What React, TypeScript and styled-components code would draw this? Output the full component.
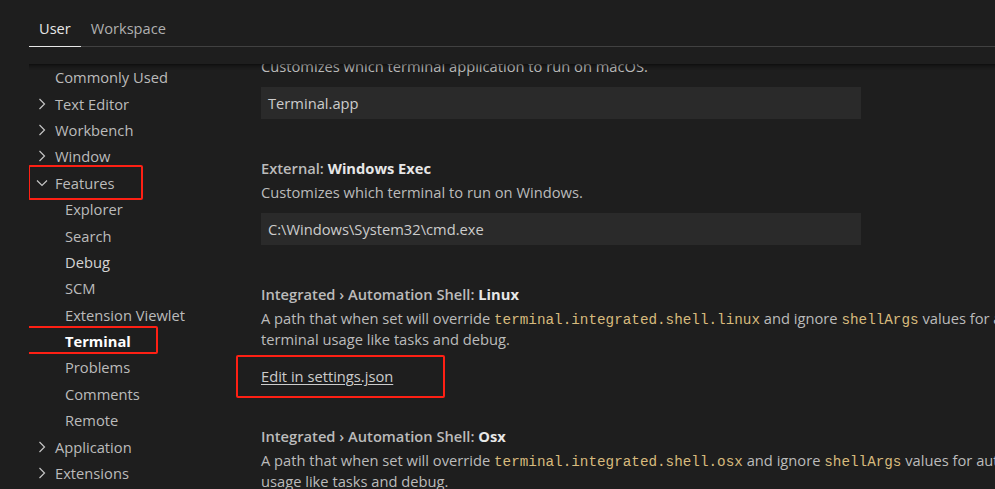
import React from 'react'
import styled, { createGlobalStyle } from 'styled-components'

const GlobalStyle = createGlobalStyle`
  html, body {
    margin: 0;
    padding: 0;
    background: #1e1e1e;
  }
  * {
    box-sizing: border-box;
  }
`

const UI_FONT = `"Open Sans", "Noto Sans", sans-serif`
const CODE_FONT = `"Liberation Mono", "DejaVu Sans Mono", monospace`

const Page = styled.div`
  width: 995px;
  height: 489px;
  overflow: hidden;
  background: #1e1e1e;
  padding-left: 29px;
  display: flex;
  flex-direction: column;
  font-family: ${UI_FONT};
  font-size: 14.7px;
  color: #bbbbbb;
`
const Header = styled.div`
  height: 64px;
  flex-shrink: 0;
`
const TabBar = styled.div`
  display: flex;
  height: 47px;
  border-bottom: 1px solid #414141;
`
const Tab = styled.div<{ $active?: boolean }>`
  display: flex;
  align-items: center;
  padding: 10px 10px 0;
  height: 47px;
  font-size: 14.6px;
  color: ${(p) => (p.$active ? '#e7e7e7' : '#b0b0b0')};
  border-bottom: 1px solid ${(p) => (p.$active ? '#e7e7e7' : 'transparent')};
`
const Body = styled.div`
  position: relative;
  flex: 1;
  display: flex;
  overflow: hidden;
  &::before {
    content: '';
    position: absolute;
    top: 0;
    left: 0;
    right: 0;
    height: 6px;
    box-shadow: #000 0 6px 6px -6px inset;
    z-index: 2;
  }
`
const Toc = styled.div`
  width: 203px;
  flex-shrink: 0;
  display: flex;
  flex-direction: column;
`
const TocRow = styled.div<{ $indent: number; $strong?: boolean; $bright?: boolean }>`
  position: relative;
  display: flex;
  align-items: center;
  height: 26.4px;
  padding-left: ${(p) => p.$indent}px;
  white-space: nowrap;
  font-weight: ${(p) => (p.$strong ? 700 : 400)};
  color: ${(p) => (p.$strong ? '#ffffff' : p.$bright ? '#d4d4d4' : '#bbbbbb')};
`
const Twistie = styled.span`
  width: 12px;
  height: 14px;
  margin-right: 7px;
  display: flex;
  align-items: center;
  justify-content: center;
`
const Highlight = styled.span<{ $left: number; $top: number; $w: number; $h: number }>`
  position: absolute;
  left: ${(p) => p.$left}px;
  top: ${(p) => p.$top}px;
  width: ${(p) => p.$w}px;
  height: ${(p) => p.$h}px;
  border: 2px solid #fe2014;
  border-radius: 2px;
  pointer-events: none;
`
const Content = styled.div`
  flex: 1;
  overflow: hidden;
  padding-left: 29px;
`
const SettingsList = styled.div`
  width: 920px;
  margin-top: -33px;
  display: flex;
  flex-direction: column;
  gap: 38px;
`
const Setting = styled.div`
  display: flex;
  flex-direction: column;
`
const Title = styled.div`
  line-height: 22px;
  font-weight: 600;
  color: #bbbbbb;
  white-space: nowrap;
`
const Key = styled.span`
  font-weight: 700;
  color: #e7e7e7;
`
const Description = styled.div`
  margin-top: 3px;
  line-height: 21px;
  color: #bbbbbb;
`
const Code = styled.code`
  font-family: ${CODE_FONT};
  font-size: 14.3px;
  line-height: 1;
  color: #d7ba7d;
`
const TextInput = styled.div`
  margin-top: 10px;
  width: 600px;
  height: 32px;
  display: flex;
  align-items: center;
  padding-left: 7px;
  background: #2a2a2a;
  color: #cccccc;
`
const LinkRow = styled.div`
  position: relative;
  margin-top: 16px;
  line-height: 21px;
`
const EditLink = styled.span`
  color: #cccccc;
  text-decoration: underline;
  text-underline-offset: 2px;
`

const Chevron = ({ open }: { open?: boolean }) => (
  <svg width="12" height="14" viewBox="0 0 12 14" fill="none">
    {open ? (
      <path d="M1 4.5 L6 9.5 L11 4.5" stroke="#c5c5c5" strokeWidth="1.2" />
    ) : (
      <path d="M3.5 2 L8.5 7 L3.5 12" stroke="#c5c5c5" strokeWidth="1.2" />
    )}
  </svg>
)

type TocItem = {
  label: string
  level: 0 | 1
  twistie?: 'open' | 'closed'
  strong?: boolean
  bright?: boolean
  box?: { left: number; top: number; w: number; h: number }
}

const toc: TocItem[] = [
  { label: 'Commonly Used', level: 0 },
  { label: 'Text Editor', level: 0, twistie: 'closed' },
  { label: 'Workbench', level: 0, twistie: 'closed' },
  { label: 'Window', level: 0, twistie: 'closed' },
  { label: 'Features', level: 0, twistie: 'open', box: { left: -1, top: -5, w: 115, h: 35 } },
  { label: 'Explorer', level: 1 },
  { label: 'Search', level: 1 },
  { label: 'Debug', level: 1, bright: true },
  { label: 'SCM', level: 1 },
  { label: 'Extension Viewlet', level: 1 },
  { label: 'Terminal', level: 1, strong: true, box: { left: -8, top: -2, w: 137, h: 28 } },
  { label: 'Problems', level: 1 },
  { label: 'Comments', level: 1 },
  { label: 'Remote', level: 1 },
  { label: 'Application', level: 0, twistie: 'closed' },
  { label: 'Extensions', level: 0, twistie: 'closed' },
]

const indentFor = (item: TocItem) => (item.twistie ? 7 : item.level === 1 ? 36 : 26)

const App = () => {
  return (
    <>
      <GlobalStyle />
      <Page>
        <Header>
          <TabBar>
            <Tab $active>User</Tab>
            <Tab>Workspace</Tab>
          </TabBar>
        </Header>
        <Body>
          <Toc>
            {toc.map((item) => (
              <TocRow
                key={item.label}
                $indent={indentFor(item)}
                $strong={item.strong}
                $bright={item.bright}
              >
                {item.twistie && (
                  <Twistie>
                    <Chevron open={item.twistie === 'open'} />
                  </Twistie>
                )}
                {item.label}
                {item.box && (
                  <Highlight
                    $left={item.box.left}
                    $top={item.box.top}
                    $w={item.box.w}
                    $h={item.box.h}
                  />
                )}
              </TocRow>
            ))}
          </Toc>
          <Content>
            <SettingsList>
              <Setting>
                <Title>
                  External: <Key>Osx Exec</Key>
                </Title>
                <Description>Customizes which terminal application to run on macOS.</Description>
                <TextInput>Terminal.app</TextInput>
              </Setting>
              <Setting>
                <Title>
                  External: <Key>Windows Exec</Key>
                </Title>
                <Description>Customizes which terminal to run on Windows.</Description>
                <TextInput>C:\Windows\System32\cmd.exe</TextInput>
              </Setting>
              <Setting>
                <Title>
                  Integrated › Automation Shell: <Key>Linux</Key>
                </Title>
                <Description>
                  A path that when set will override <Code>terminal.integrated.shell.linux</Code> and
                  ignore <Code>shellArgs</Code> values for automation-related terminal usage like tasks
                  and debug.
                </Description>
                <LinkRow>
                  <EditLink>Edit in settings.json</EditLink>
                  <Highlight $left={-25} $top={-11} $w={209} $h={43} />
                </LinkRow>
              </Setting>
              <Setting>
                <Title>
                  Integrated › Automation Shell: <Key>Osx</Key>
                </Title>
                <Description>
                  A path that when set will override <Code>terminal.integrated.shell.osx</Code> and
                  ignore <Code>shellArgs</Code> values for automation-related terminal usage like tasks
                  and debug.
                </Description>
              </Setting>
            </SettingsList>
          </Content>
        </Body>
      </Page>
    </>
  )
}

export default App
